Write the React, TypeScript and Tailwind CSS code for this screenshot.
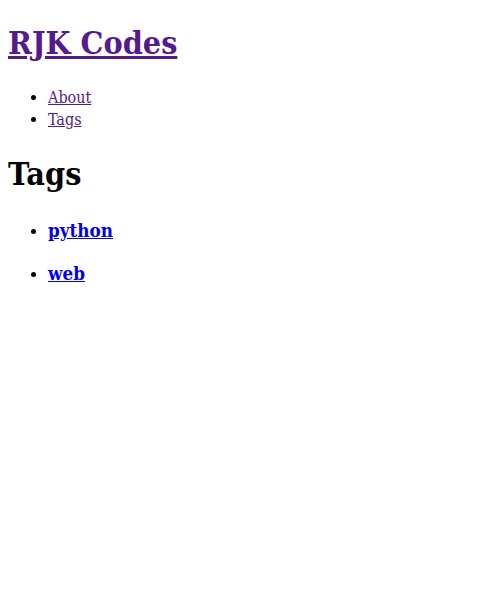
export default function App() {
  return (
    <div className="min-h-screen bg-white px-2 font-['DejaVu_Serif_Condensed','DejaVu_Serif',serif] text-black leading-[normal]">
      <header>
        <h1 className="my-[21.44px] text-[32px] font-bold leading-[44px]">
          <a href="#" className="text-[#551a8b] underline">
            RJK Codes
          </a>
        </h1>
        <ul className="my-4 list-disc pl-10 text-base leading-[22px]">
          <li>
            <a href="#" className="text-[#551a8b] underline">About</a>
          </li>
          <li>
            <a href="#" className="text-[#551a8b] underline">Tags</a>
          </li>
        </ul>
      </header>
      <main>
        <h1 className="my-[21.44px] text-[32px] font-bold leading-[44px]">Tags</h1>
        <ul className="my-4 list-disc pl-10">
          <li>
            <h3 className="my-[18.72px] text-[18.72px] font-bold leading-[25px]">
              <a href="#" className="text-[#0000ee] underline">python</a>
            </h3>
          </li>
          <li>
            <h3 className="my-[18.72px] text-[18.72px] font-bold leading-[25px]">
              <a href="#" className="text-[#0000ee] underline">web</a>
            </h3>
          </li>
        </ul>
      </main>
    </div>
  )
}
